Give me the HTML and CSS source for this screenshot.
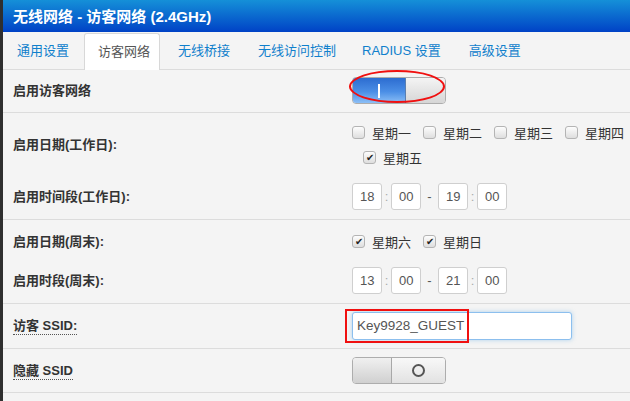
FILE: index.html
```html
<!DOCTYPE html>
<html>
<head>
	<title>无线网络 - 访客网络</title>
	<link rel="stylesheet" href="styles.css">
</head>
<body>
<div class="page">
  <div class="header">无线网络 - 访客网络 (2.4GHz)</div>

  <div class="tabs">
    <a class="tab">通用设置</a>
    <a class="tab active">访客网络</a>
    <a class="tab">无线桥接</a>
    <a class="tab">无线访问控制</a>
    <a class="tab tight">RADIUS 设置</a>
    <a class="tab">高级设置</a>
  </div>

  <div class="group">
    <div class="field row-1">
      <label class="name">启用访客网络</label>
      <div class="ctrl">
        <div class="switch on"><span class="switch-on"><i class="bar"></i></span><span class="switch-knob"></span></div>
        <div class="mark-ellipse"></div>
      </div>
    </div>
  </div>

  <div class="group">
    <div class="field days-a">
      <label class="name">启用日期(工作日):</label>
      <div class="ctrl days">
        <span class="day"><i class="box"></i>星期一</span>
        <span class="day"><i class="box"></i>星期二</span>
        <span class="day"><i class="box"></i>星期三</span>
        <span class="day"><i class="box"></i>星期四</span>
        <span class="day wrap"><i class="box checked">✔</i>星期五</span>
      </div>
    </div>
    <div class="field times">
      <label class="name">启用时间段(工作日):</label>
      <div class="ctrl clock">
        <span class="num">18</span><span class="sep">:</span><span class="num">00</span><span class="dash">-</span><span class="num">19</span><span class="sep">:</span><span class="num">00</span>
      </div>
    </div>
  </div>

  <div class="group">
    <div class="field days-b">
      <label class="name">启用日期(周末):</label>
      <div class="ctrl days">
        <span class="day"><i class="box checked">✔</i>星期六</span>
        <span class="day"><i class="box checked">✔</i>星期日</span>
      </div>
    </div>
    <div class="field times">
      <label class="name">启用时段(周末):</label>
      <div class="ctrl clock">
        <span class="num">13</span><span class="sep">:</span><span class="num">00</span><span class="dash">-</span><span class="num">21</span><span class="sep">:</span><span class="num">00</span>
      </div>
    </div>
  </div>

  <div class="group">
    <div class="field ssid-row">
      <label class="name"><span class="hint">访客 SSID:</span></label>
      <div class="ctrl">
        <div class="text-input">Key9928_GUEST</div>
        <div class="mark-box"></div>
      </div>
    </div>
  </div>

  <div class="group">
    <div class="field hide-row">
      <label class="name"><span class="hint">隐藏 SSID</span></label>
      <div class="ctrl">
        <div class="switch off"><span class="switch-knob"></span><span class="switch-off"><i class="ring"></i></span></div>
      </div>
    </div>
  </div>
</div>
</body>
</html>
```

FILE: styles.css
```css
html, body {
    margin: 0;
    padding: 0;
}

body {
    background: #f4f4f4;
    font: 13px "Liberation Sans", "Noto Sans CJK SC", sans-serif;
    color: #333;
    overflow: hidden;
}

.page {
    border-left: 3px solid #2f2f2f;
    min-height: 401px;
    box-sizing: border-box;
}

/* title bar */
.header {
    height: 32px;
    line-height: 34px;
    padding-left: 10px;
    background: linear-gradient(#1590d8, #0042c6);
    color: #fff;
    font-weight: bold;
    font-size: 15px;
}

/* tabs */
.tabs {
    display: flex;
    height: 36px;
    padding-top: 1px;
    border-bottom: 1px solid #dcdcdc;
}

.tab {
    display: block;
    height: 36px;
    line-height: 36px;
    padding: 0 14px;
    color: #1080cc;
    white-space: nowrap;
    box-sizing: border-box;
}

.tab.tight {
    padding-left: 12px;
}

.tab.active {
    background: #fff;
    color: #555;
    border: 1px solid #d8d8d8;
    border-bottom: 0;
    border-radius: 3px 3px 0 0;
    height: 37px;
    line-height: 35px;
    margin: 0 4px -1px 1px;
    padding: 0 9px 0 13px;
}

/* rows */
.group {
    border-bottom: 1px solid #dcdcdc;
}

.field {
    display: grid;
    grid-template-columns: 349px 1fr;
    align-items: center;
}

.name {
    padding-left: 10px;
    padding-bottom: 3px;
    font-weight: bold;
    color: #333;
}

.ctrl {
    position: relative;
}

.row-1 { padding: 7px 0 8px; }
.days-a { padding: 7px 0 4px; }
.days-b { padding: 9px 0 4px; }
.times { padding: 9px 0 9px; }
.ssid-row { padding: 8px 0 8px; }
.hide-row { padding: 8px 0 8px; }

.hint {
    border-bottom: 1px dotted #555;
    padding-bottom: 1px;
}

/* checkboxes */
.days {
    display: flex;
    flex-wrap: wrap;
    column-gap: 12px;
}

.day {
    display: flex;
    align-items: center;
    height: 25px;
    color: #333;
    white-space: nowrap;
}

.day.wrap {
    margin-left: 11px;
}

.box {
    display: inline-block;
    width: 13px;
    height: 13px;
    box-sizing: border-box;
    margin-right: 7px;
    border: 1px solid #b4b4b4;
    border-radius: 3px;
    background: linear-gradient(#fdfdfd, #dedede);
    font-style: normal;
    font-size: 10px;
    line-height: 11px;
    text-align: center;
    color: #222;
}

/* time inputs */
.clock {
    display: flex;
    align-items: center;
}

.num {
    width: 30px;
    height: 27px;
    box-sizing: border-box;
    border: 1px solid #cfcfcf;
    border-radius: 3px;
    background: #fff;
    color: #555;
    line-height: 25px;
    padding-left: 7px;
}

.sep {
    width: 9px;
    text-align: center;
    color: #aaa;
}

.dash {
    width: 17px;
    text-align: center;
    color: #555;
}

/* ssid input */
.text-input {
    width: 220px;
    height: 28px;
    box-sizing: border-box;
    border: 1px solid #8cbfee;
    border-radius: 3px;
    background: #fff;
    box-shadow: 0 0 4px rgba(102, 175, 233, .5);
    padding-left: 4px;
    line-height: 26px;
    font-size: 13.5px;
    color: #555;
}

/* switches */
.switch {
    display: flex;
    width: 94px;
    height: 27px;
    box-sizing: border-box;
    border: 1px solid #adadad;
    border-radius: 4px;
    overflow: hidden;
}

.switch-on {
    width: 52px;
    background: linear-gradient(#2c6cd0, #4b8fe6 55%, #8cbff6);
    display: flex;
    justify-content: center;
    align-items: center;
    border-right: 1px solid #5a7fb0;
}

.bar {
    width: 2px;
    height: 14px;
    background: #fff;
}

.switch-knob {
    flex: 1;
    background: linear-gradient(#f4f4f4, #d6d6d6);
}

.switch.off .switch-knob {
    flex: none;
    width: 38px;
    border-right: 1px solid #a8a8a8;
    background: linear-gradient(#f0f0f0, #d0d0d0);
}

.switch-off {
    flex: 1;
    display: flex;
    justify-content: center;
    align-items: center;
    background: linear-gradient(#f8f8f8, #e2e2e2);
}

.ring {
    width: 9px;
    height: 9px;
    border: 2px solid #555;
    border-radius: 50%;
}

/* red annotations drawn over the screenshot */
.mark-ellipse {
    position: absolute;
    left: -3px;
    top: -7px;
    width: 96px;
    height: 33px;
    box-sizing: border-box;
    border: 2px solid #f01010;
    border-radius: 50%;
}

.mark-box {
    position: absolute;
    left: -7px;
    top: -3px;
    width: 124px;
    height: 34px;
    box-sizing: border-box;
    border: 2px solid #f01010;
}
```
